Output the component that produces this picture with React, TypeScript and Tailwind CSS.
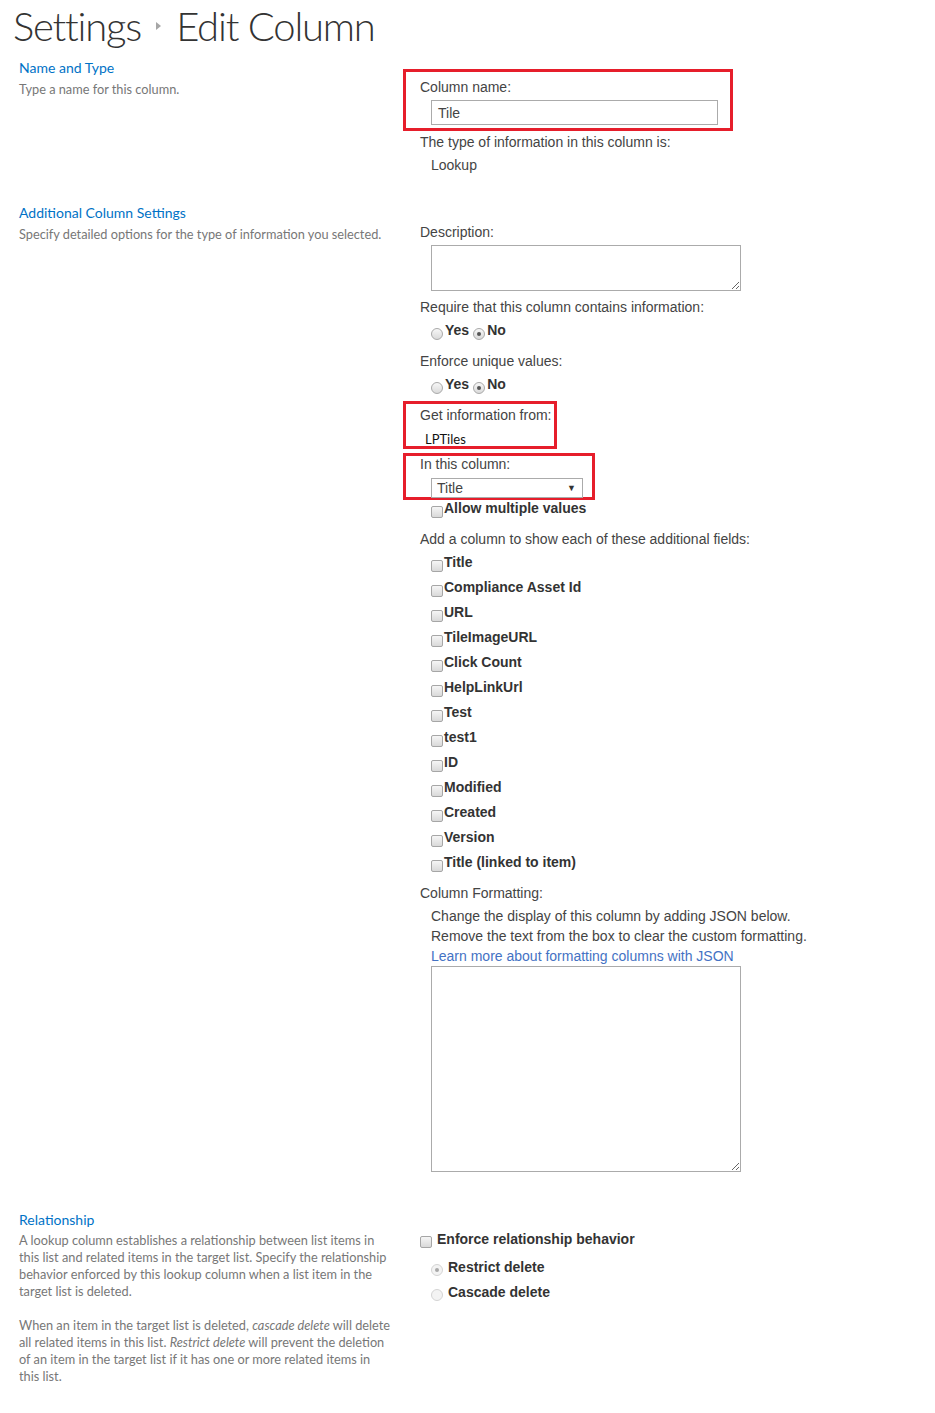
import React from 'react';

const sans = { fontFamily: '"Liberation Sans", Arial, sans-serif' };

function Radio({ checked = false, faded = false }: { checked?: boolean; faded?: boolean }) {
  return (
    <span
      className={`inline-flex h-[12px] w-[12px] shrink-0 items-center justify-center rounded-full border ${
        faded ? 'border-[#d4d4d4] bg-[#f3f3f3]' : 'border-[#a9a9a9] bg-gradient-to-b from-[#f7f7f7] to-[#dadada]'
      }`}
    >
      {checked && <span className={`h-[4px] w-[4px] rounded-full ${faded ? 'bg-[#a8a8a8]' : 'bg-[#555]'}`} />}
    </span>
  );
}

function Box() {
  return (
    <span className="inline-block h-[12px] w-[12px] shrink-0 rounded-[2px] border border-[#a6a6a6] bg-gradient-to-b from-[#f6f6f6] to-[#d9d9d9]" />
  );
}

function CheckRow({ label }: { label: string }) {
  return (
    <div className="flex h-[25px] items-start pl-[11px]">
      <span className="mt-[7px] flex">
        <Box />
      </span>
      <span className="ml-[1px] text-[14px] font-bold leading-[18px] text-[#333]">{label}</span>
    </div>
  );
}

function YesNo() {
  return (
    <div className="flex h-[18px] items-start pl-[11px] text-[14px] font-bold leading-[18px] text-[#333]">
      <span className="mt-[7px] flex">
        <Radio />
      </span>
      <span className="ml-[2px]">Yes</span>
      <span className="ml-[4px] mt-[7px] flex">
        <Radio checked />
      </span>
      <span className="ml-[2px]">No</span>
    </div>
  );
}

const fields = [
  'Title',
  'Compliance Asset Id',
  'URL',
  'TileImageURL',
  'Click Count',
  'HelpLinkUrl',
  'Test',
  'test1',
  'ID',
  'Modified',
  'Created',
  'Version',
  'Title (linked to item)',
];

export default function App() {
  const seg = { fontFamily: 'Lato, "Open Sans", sans-serif' };

  return (
    <div className="h-[1413px] w-[935px] bg-white">
      {/* page title */}
      <div
        className="flex h-[59px] items-start pl-[13px] pt-[1px] text-[40px] font-light leading-[50px] tracking-[-1.2px] text-[#333]"
        style={seg}
      >
        <span>Settings</span>
        <span className="mx-[15px] mt-[21px] inline-block h-0 w-0 border-y-[4px] border-l-[5px] border-y-transparent border-l-[#a6a6a6]" />
        <span>Edit Column</span>
      </div>

      {/* Name and Type */}
      <div className="flex">
        <div className="w-[403px] shrink-0 pl-[19px]" style={seg}>
          <div className="text-[14px] leading-[18px] text-[#0072c6]">Name and Type</div>
          <div className="mt-[4px] text-[12.75px] leading-[17px] text-[#777]">Type a name for this column.</div>
        </div>
        <div className="flex-1 pt-[10px] text-[14px] text-[#444]" style={sans}>
          <div className="h-[62px] w-[330px] border-[3px] border-[#e61e2b] pl-[14px] pt-[6px]">
            <div className="leading-[18px]">Column name:</div>
            <div className="ml-[11px] mt-[4px] flex h-[25px] w-[287px] items-center border border-[#ababab] pl-[6px] leading-[18px]">
              Tile
            </div>
          </div>
          <div className="ml-[17px] mt-[2px] leading-[18px]">The type of information in this column is:</div>
          <div className="ml-[28px] mt-[5px] leading-[18px]">Lookup</div>
        </div>
      </div>

      {/* Additional Column Settings */}
      <div className="mt-[30px] flex">
        <div className="w-[403px] shrink-0 pl-[19px]" style={seg}>
          <div className="text-[14px] leading-[18px] text-[#0072c6]">Additional Column Settings</div>
          <div className="mt-[4px] text-[12.75px] leading-[17px] text-[#777]">
            Specify detailed options for the type of information you selected.
          </div>
        </div>
        <div className="flex-1 pt-[19px] text-[14px] text-[#444]" style={sans}>
          <div className="pl-[17px]">
            <div className="leading-[18px]">Description:</div>
            <textarea className="ml-[11px] mt-[4px] block h-[46px] w-[310px] border border-[#ababab]" />
            <div className="mt-[7px] leading-[18px]">Require that this column contains information:</div>
            <div className="mt-[5px]">
              <YesNo />
            </div>
            <div className="mt-[13px] leading-[18px]">Enforce unique values:</div>
            <div className="mt-[5px]">
              <YesNo />
            </div>
          </div>

          <div className="mt-[8px] h-[48px] w-[154px] border-[3px] border-[#e61e2b] pl-[14px] pt-[2px]">
            <div className="leading-[18px]">Get information from:</div>
            <div className="ml-[5px] mt-[7px] text-[13px] leading-[16px] text-[#111]" style={seg}>
              LPTiles
            </div>
          </div>

          <div className="mt-[4px] h-[47px] w-[192px] border-[3px] border-[#e61e2b] pl-[14px]">
            <div className="mt-[-1px] leading-[18px]">In this column:</div>
            <div className="ml-[11px] mt-[5px] flex h-[20px] w-[152px] items-center justify-between border border-[#ababab] pl-[5px] pr-[6px] leading-[18px]">
              <span>Title</span>
              <span className="text-[9px] text-[#333]">▼</span>
            </div>
          </div>

          <div className="pl-[17px]">
            <div className="-mt-[1px]">
              <CheckRow label="Allow multiple values" />
            </div>
            <div className="mt-[6px] leading-[18px]">Add a column to show each of these additional fields:</div>
            <div className="mt-[5px]">
              {fields.map((f, i) => (
                <CheckRow key={i} label={f} />
              ))}
            </div>
            <div className="mt-[6px] leading-[18px]">Column Formatting:</div>
            <div className="ml-[11px] mt-[4px] leading-[20px]">
              <div>Change the display of this column by adding JSON below.</div>
              <div>Remove the text from the box to clear the custom formatting.</div>
              <div className="text-[#4472c4]">Learn more about formatting columns with JSON</div>
              <textarea className="block h-[206px] w-[310px] border border-[#ababab]" />
            </div>
          </div>
        </div>
      </div>

      {/* Relationship */}
      <div className="mt-[39px] flex">
        <div className="w-[403px] shrink-0 pl-[19px] pr-[6px]" style={seg}>
          <div className="text-[14px] leading-[18px] text-[#0072c6]">Relationship</div>
          <div className="mt-[3px] text-[12.75px] leading-[17px] text-[#777]">
            A lookup column establishes a relationship between list items in
            <br />
            this list and related items in the target list. Specify the relationship
            <br />
            behavior enforced by this lookup column when a list item in the
            <br />
            target list is deleted.
          </div>
          <div className="mt-[17px] text-[12.75px] leading-[17px] text-[#777]">
            When an item in the target list is deleted, <i>cascade delete</i> will delete
            <br />
            all related items in this list. <i>Restrict delete</i> will prevent the deletion
            <br />
            of an item in the target list if it has one or more related items in
            <br />
            this list.
          </div>
        </div>
        <div className="flex-1 pl-[17px] pt-[19px] text-[14px] font-bold text-[#333]" style={sans}>
          <div className="flex h-[18px] items-start leading-[18px]">
            <span className="mt-[6px] flex">
              <Box />
            </span>
            <span className="ml-[5px]">Enforce relationship behavior</span>
          </div>
          <div className="ml-[11px] mt-[10px] flex h-[18px] items-start leading-[18px]">
            <span className="mt-[6px] flex">
              <Radio checked faded />
            </span>
            <span className="ml-[5px]">Restrict delete</span>
          </div>
          <div className="ml-[11px] mt-[7px] flex h-[18px] items-start leading-[18px]">
            <span className="mt-[6px] flex">
              <Radio faded />
            </span>
            <span className="ml-[5px]">Cascade delete</span>
          </div>
        </div>
      </div>
    </div>
  );
}
